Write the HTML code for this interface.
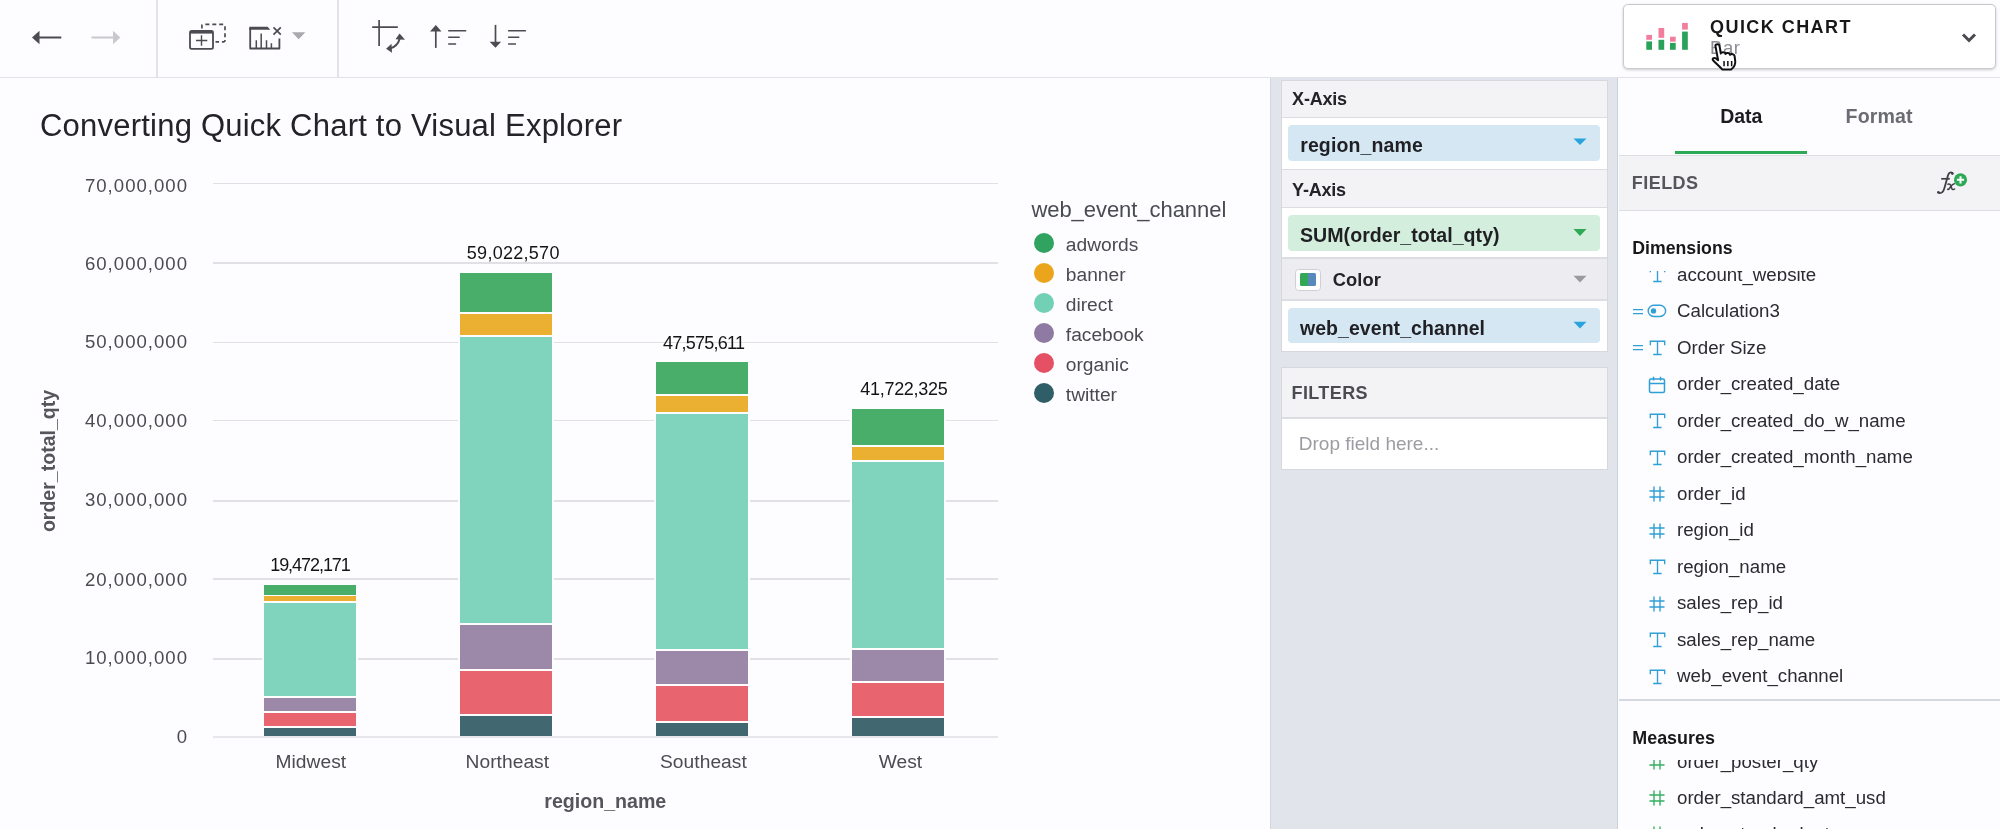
<!DOCTYPE html><html><head><meta charset="utf-8"><style>
*{box-sizing:border-box;margin:0;padding:0}
html,body{width:2000px;height:829px;overflow:hidden;background:#fdfcfe;font-family:"Liberation Sans",sans-serif;color:#2b2b30}
.a{position:absolute}
.t{position:absolute;white-space:nowrap;line-height:1}
.b{font-weight:bold}
</style></head><body><div id="w" style="position:absolute;left:0;top:0;width:2000px;height:829px;will-change:transform">
<div class="a" style="left:0.00px;top:76.50px;width:2000.00px;height:1.50px;background:#e1e3e9;"></div>
<div class="a" style="left:156.00px;top:0.00px;width:1.50px;height:77.00px;background:#e1e3e9;"></div>
<div class="a" style="left:337.00px;top:0.00px;width:1.50px;height:77.00px;background:#e1e3e9;"></div>
<svg class="a" style="left:0;top:0" width="540" height="77" viewBox="0 0 540 77">
 <path d="M32 37.5 L39.5 30.8 L39.5 44.2 Z" fill="#4b4b52"/>
 <rect x="38" y="36.5" width="23.3" height="2" fill="#4b4b52"/>
 <rect x="91.5" y="36.5" width="23" height="2" fill="#c8c8cd"/>
 <path d="M120.3 37.5 L113 30.8 L113 44.2 Z" fill="#c8c8cd"/>
 <!-- duplicate icon -->
 <rect x="190" y="31" width="23" height="17.8" rx="1.6" fill="none" stroke="#4b4b52" stroke-width="1.8"/>
 <rect x="190" y="31" width="23" height="2.6" fill="#4b4b52"/>
 <path d="M201.5 35.3 V45.8 M196 40.5 H207.3" stroke="#4b4b52" stroke-width="1.4"/>
 <path d="M201.9 28.6 V25.8 Q201.9 24.3 203.4 24.3 H223.6 Q225 24.3 225 25.8 V40.3 Q225 41.8 223.6 41.8 H215.5" fill="none" stroke="#4b4b52" stroke-width="1.7" stroke-dasharray="4 2.9"/>
 <!-- chart x icon -->
 <path d="M250.2 28 V48.5 H279.4 V38.4" fill="none" stroke="#4b4b52" stroke-width="1.8" stroke-linejoin="round"/>
 <path d="M249.3 26.8 H267.6 L270.3 29.7 H249.3 Z" fill="#4b4b52"/>
 <path d="M256.3 48 V40.2 M261.2 48 V33.5 M266.5 48 V40.2 M271.4 48 V43.3" stroke="#4b4b52" stroke-width="1.5"/>
 <path d="M273.5 27.3 L280.8 34.6 M280.8 27.3 L273.5 34.6" stroke="#4b4b52" stroke-width="1.7"/>
 <path d="M292 32.2 L305.3 32.2 L298.65 39.2 Z" fill="#a9a9ae"/>
 <!-- swap axes icon -->
 <path d="M372.2 27.15 H397.8 M379.1 20 V46" stroke="#4b4b52" stroke-width="1.7"/>
 <path d="M390 48.6 Q397.5 46.5 399.8 38.5" fill="none" stroke="#4b4b52" stroke-width="2"/>
 <path d="M399.6 33.4 L405 39.8 L395.5 39.3 Z" fill="#4b4b52"/>
 <path d="M386.1 48.8 L391.5 43.8 L392 52.8 Z" fill="#4b4b52"/>
 <!-- sort asc -->
 <path d="M435.8 47.9 V30" stroke="#4b4b52" stroke-width="1.7"/>
 <path d="M430 31.4 L435.8 24.9 L441.5 31.4 Z" fill="#4b4b52"/>
 <path d="M448.2 30.75 H466.2 M448.2 37.2 H459.7 M448.2 43.95 H456.1" stroke="#4b4b52" stroke-width="1.5"/>
 <!-- sort desc -->
 <path d="M495.5 24.9 V43" stroke="#4b4b52" stroke-width="1.7"/>
 <path d="M489.6 41.8 L495.5 47.85 L501.1 41.8 Z" fill="#4b4b52"/>
 <path d="M508.1 30.75 H525.9 M508.1 37.2 H519.3 M508.1 43.95 H516" stroke="#4b4b52" stroke-width="1.5"/>
</svg>
<div class="a" style="left:1622.5px;top:3.5px;width:373px;height:65px;background:#fff;border:1px solid #c9cacf;border-radius:5px;box-shadow:0 1px 3px rgba(0,0,0,0.2)"></div>
<svg class="a" style="left:1640px;top:18px" width="56" height="36" viewBox="1640 18 56 36">
 <rect x="1646.3" y="34.9" width="5.7" height="4.9" fill="#f17e9c"/>
 <rect x="1646.3" y="41.4" width="5.7" height="8.4" fill="#2ba25a"/>
 <rect x="1658.5" y="28" width="5.7" height="9.8" fill="#f17e9c"/>
 <rect x="1658.5" y="39.8" width="5.7" height="10" fill="#2ba25a"/>
 <rect x="1670" y="36.7" width="5.7" height="5" fill="#f17e9c"/>
 <rect x="1670" y="42.9" width="5.7" height="6.9" fill="#2ba25a"/>
 <rect x="1682.1" y="22.9" width="5.7" height="6.7" fill="#f17e9c"/>
 <rect x="1682.1" y="31.6" width="5.7" height="18.2" fill="#2ba25a"/>
</svg>
<div class="t b" style="left:1710.00px;top:17.90px;font-size:18px;color:#18181b;letter-spacing:1.45px;">QUICK CHART</div>
<div class="t" style="left:1710.00px;top:38.77px;font-size:18.5px;color:#8e8e94;letter-spacing:0.6px;">Bar</div>
<svg class="a" style="left:1958px;top:28px" width="22" height="18" viewBox="0 0 22 18">
 <path d="M5 6.5 L11 12.5 L17 6.5" fill="none" stroke="#4a4a50" stroke-width="3"/>
</svg>
<svg class="a" style="left:1706px;top:38px" width="40" height="40" viewBox="0 0 40 40">
 <g transform="translate(-1.98,3.24) scale(1.083,0.82)"><path d="M10.5 5.5 C10.5 3 14 3 14.3 5.5 L15.5 15 C16 13 19.5 13 19.8 15.5 C20.5 13.8 23.8 14 24 16.5 C25 15 28 15.5 28.2 18 L28.8 24 C29.3 29 27.5 32 25 34.5 L17 34.5 C15 32 12 28 8.5 23.5 C7 21.5 9 19.5 11 21 L13 23 Z" fill="#fff" stroke="#111" stroke-width="2" stroke-linejoin="round" vector-effect="non-scaling-stroke"/>
 <path d="M18.5 24 V30.5 M22 24 V30.5 M25.5 24 V30.5" stroke="#111" stroke-width="1.5" vector-effect="non-scaling-stroke"/></g>
</svg>
<div class="t" style="left:40.00px;top:110.05px;font-size:31px;color:#232328;letter-spacing:0.22px;">Converting Quick Chart to Visual Explorer</div>
<div class="a" style="left:212.50px;top:736.00px;width:785.00px;height:1.60px;background:#e6e7eb;"></div>
<div class="t" style="right:1813px;top:728.39px;font-size:18.6px;color:#4b4b50;letter-spacing:0px">0</div>
<div class="a" style="left:212.50px;top:658.00px;width:785.00px;height:1.60px;background:#e1e1e5;"></div>
<div class="t" style="right:1812.0px;top:648.79px;font-size:18.6px;color:#4b4b50;letter-spacing:1.0px">10,000,000</div>
<div class="a" style="left:212.50px;top:578.00px;width:785.00px;height:1.60px;background:#e1e1e5;"></div>
<div class="t" style="right:1812.0px;top:570.99px;font-size:18.6px;color:#4b4b50;letter-spacing:1.0px">20,000,000</div>
<div class="a" style="left:212.50px;top:500.00px;width:785.00px;height:1.60px;background:#e1e1e5;"></div>
<div class="t" style="right:1812.0px;top:490.89px;font-size:18.6px;color:#4b4b50;letter-spacing:1.0px">30,000,000</div>
<div class="a" style="left:212.50px;top:419.80px;width:785.00px;height:1.60px;background:#e1e1e5;"></div>
<div class="t" style="right:1812.0px;top:412.04px;font-size:18.6px;color:#4b4b50;letter-spacing:1.0px">40,000,000</div>
<div class="a" style="left:212.50px;top:341.90px;width:785.00px;height:1.60px;background:#e1e1e5;"></div>
<div class="t" style="right:1812.0px;top:333.24px;font-size:18.6px;color:#4b4b50;letter-spacing:1.0px">50,000,000</div>
<div class="a" style="left:212.50px;top:262.25px;width:785.00px;height:1.60px;background:#e1e1e5;"></div>
<div class="t" style="right:1812.0px;top:255.34px;font-size:18.6px;color:#4b4b50;letter-spacing:1.0px">60,000,000</div>
<div class="a" style="left:212.50px;top:182.80px;width:785.00px;height:1.60px;background:#e1e1e5;"></div>
<div class="t" style="right:1812.0px;top:176.79px;font-size:18.6px;color:#4b4b50;letter-spacing:1.0px">70,000,000</div>
<div class="t b" style="left:49px;top:460.6px;font-size:19.55px;color:#55555b;transform:translate(-50%,-50%) rotate(-90deg);transform-origin:center;letter-spacing:0px">order_total_qty</div>
<div class="a" style="left:261.80px;top:583.00px;width:96.60px;height:153.20px;background:#fdfcfe;"></div>
<div class="a" style="left:263.80px;top:585.00px;width:92.60px;height:9.70px;background:#4aae6b;"></div>
<div class="a" style="left:263.80px;top:596.30px;width:92.60px;height:5.10px;background:#ebb031;"></div>
<div class="a" style="left:263.80px;top:603.10px;width:92.60px;height:92.90px;background:#80d3bd;"></div>
<div class="a" style="left:263.80px;top:698.00px;width:92.60px;height:13.00px;background:#9c89aa;"></div>
<div class="a" style="left:263.80px;top:712.90px;width:92.60px;height:13.10px;background:#e8656f;"></div>
<div class="a" style="left:263.80px;top:727.90px;width:92.60px;height:8.20px;background:#416870;"></div>
<div class="a" style="left:457.90px;top:270.50px;width:96.60px;height:465.70px;background:#fdfcfe;"></div>
<div class="a" style="left:459.90px;top:272.50px;width:92.60px;height:39.30px;background:#4aae6b;"></div>
<div class="a" style="left:459.90px;top:314.10px;width:92.60px;height:20.80px;background:#ebb031;"></div>
<div class="a" style="left:459.90px;top:337.30px;width:92.60px;height:285.70px;background:#80d3bd;"></div>
<div class="a" style="left:459.90px;top:624.70px;width:92.60px;height:44.70px;background:#9c89aa;"></div>
<div class="a" style="left:459.90px;top:671.00px;width:92.60px;height:42.80px;background:#e8656f;"></div>
<div class="a" style="left:459.90px;top:715.70px;width:92.60px;height:20.10px;background:#416870;"></div>
<div class="a" style="left:653.90px;top:360.20px;width:96.60px;height:376.00px;background:#fdfcfe;"></div>
<div class="a" style="left:655.90px;top:362.20px;width:92.60px;height:31.40px;background:#4aae6b;"></div>
<div class="a" style="left:655.90px;top:395.70px;width:92.60px;height:16.40px;background:#ebb031;"></div>
<div class="a" style="left:655.90px;top:414.10px;width:92.60px;height:235.10px;background:#80d3bd;"></div>
<div class="a" style="left:655.90px;top:651.20px;width:92.60px;height:32.90px;background:#9c89aa;"></div>
<div class="a" style="left:655.90px;top:686.10px;width:92.60px;height:34.60px;background:#e8656f;"></div>
<div class="a" style="left:655.90px;top:722.90px;width:92.60px;height:12.80px;background:#416870;"></div>
<div class="a" style="left:849.70px;top:406.90px;width:96.60px;height:329.30px;background:#fdfcfe;"></div>
<div class="a" style="left:851.70px;top:408.90px;width:92.60px;height:35.80px;background:#4aae6b;"></div>
<div class="a" style="left:851.70px;top:447.10px;width:92.60px;height:12.70px;background:#ebb031;"></div>
<div class="a" style="left:851.70px;top:462.00px;width:92.60px;height:185.70px;background:#80d3bd;"></div>
<div class="a" style="left:851.70px;top:649.90px;width:92.60px;height:31.00px;background:#9c89aa;"></div>
<div class="a" style="left:851.70px;top:682.90px;width:92.60px;height:32.80px;background:#e8656f;"></div>
<div class="a" style="left:851.70px;top:717.80px;width:92.60px;height:18.00px;background:#416870;"></div>
<div class="t" style="left:270.20px;top:556.40px;font-size:18px;color:#141414;letter-spacing:-1.05px;">19,472,171</div>
<div class="t" style="left:466.80px;top:243.60px;font-size:18px;color:#141414;letter-spacing:0.28px;">59,022,570</div>
<div class="t" style="left:662.90px;top:333.70px;font-size:18px;color:#141414;letter-spacing:-0.75px;">47,575,611</div>
<div class="t" style="left:860.30px;top:379.90px;font-size:18px;color:#141414;letter-spacing:-0.3px;">41,722,325</div>
<div class="t" style="left:275.50px;top:751.68px;font-size:19.2px;color:#4b4b50;letter-spacing:0.05px;">Midwest</div>
<div class="t" style="left:465.50px;top:751.68px;font-size:19.2px;color:#4b4b50;letter-spacing:0.05px;">Northeast</div>
<div class="t" style="left:660.00px;top:751.68px;font-size:19.2px;color:#4b4b50;letter-spacing:0.05px;">Southeast</div>
<div class="t" style="left:878.70px;top:751.98px;font-size:19.2px;color:#4b4b50;letter-spacing:0.05px;">West</div>
<div class="t b" style="left:544.30px;top:791.84px;font-size:19.6px;color:#55555b;letter-spacing:0px;">region_name</div>
<div class="t" style="left:1031.40px;top:198.90px;font-size:22px;color:#4a4b52;letter-spacing:-0.05px;">web_event_channel</div>
<div class="a" style="left:1033.8px;top:233.0px;width:20px;height:20px;border-radius:50%;background:#2fa35f"></div>
<div class="t" style="left:1065.80px;top:234.88px;font-size:19.2px;color:#4a4b52;letter-spacing:0px;">adwords</div>
<div class="a" style="left:1033.8px;top:263.0px;width:20px;height:20px;border-radius:50%;background:#eaa51c"></div>
<div class="t" style="left:1065.80px;top:264.88px;font-size:19.2px;color:#4a4b52;letter-spacing:0px;">banner</div>
<div class="a" style="left:1033.8px;top:293.0px;width:20px;height:20px;border-radius:50%;background:#72d0b5"></div>
<div class="t" style="left:1065.80px;top:294.88px;font-size:19.2px;color:#4a4b52;letter-spacing:0px;">direct</div>
<div class="a" style="left:1033.8px;top:323.0px;width:20px;height:20px;border-radius:50%;background:#8e7aa3"></div>
<div class="t" style="left:1065.80px;top:324.88px;font-size:19.2px;color:#4a4b52;letter-spacing:0px;">facebook</div>
<div class="a" style="left:1033.8px;top:353.0px;width:20px;height:20px;border-radius:50%;background:#e55064"></div>
<div class="t" style="left:1065.80px;top:354.88px;font-size:19.2px;color:#4a4b52;letter-spacing:0px;">organic</div>
<div class="a" style="left:1033.8px;top:383.0px;width:20px;height:20px;border-radius:50%;background:#2f5e68"></div>
<div class="t" style="left:1065.80px;top:384.88px;font-size:19.2px;color:#4a4b52;letter-spacing:0px;">twitter</div>
<div class="a" style="left:1269.50px;top:78.00px;width:1.50px;height:751.00px;background:#d3d6dc;"></div>
<div class="a" style="left:1271.00px;top:78.00px;width:347.00px;height:751.00px;background:#e1e4ea;"></div>
<div class="a" style="left:1280.5px;top:79.5px;width:327px;height:272px;background:#fff;border:1px solid #d6d8de"></div>
<div class="a" style="left:1281.50px;top:80.50px;width:325.00px;height:36.50px;background:#f3f3f6;"></div>
<div class="a" style="left:1281.50px;top:116.50px;width:325.00px;height:1.50px;background:#dcdde2;"></div>
<div class="t b" style="left:1292.10px;top:89.90px;font-size:18px;color:#232328;letter-spacing:-0.2px;">X-Axis</div>
<div class="a" style="left:1288px;top:124.8px;width:312px;height:36.2px;background:#d4e7f2;border-radius:4px"></div>
<div class="t b" style="left:1300.20px;top:136.43px;font-size:19.5px;color:#1f1f24;letter-spacing:0.12px;">region_name</div>
<svg class="a" style="left:1572px;top:137px" width="16" height="10" viewBox="0 0 16 10"><path d="M1.5 1.5 H14.5 L8 8 Z" fill="#29a3dd"/></svg>
<div class="a" style="left:1281.50px;top:168.50px;width:325.00px;height:1.50px;background:#dcdde2;"></div>
<div class="a" style="left:1281.50px;top:170.00px;width:325.00px;height:36.80px;background:#f3f3f6;"></div>
<div class="a" style="left:1281.50px;top:206.50px;width:325.00px;height:1.50px;background:#dcdde2;"></div>
<div class="t b" style="left:1292.10px;top:181.20px;font-size:18px;color:#232328;letter-spacing:-0.2px;">Y-Axis</div>
<div class="a" style="left:1288px;top:214.5px;width:311.7px;height:36.1px;background:#d3eedc;border-radius:4px"></div>
<div class="t b" style="left:1300.00px;top:226.34px;font-size:19.6px;color:#1f1f24;letter-spacing:0.02px;">SUM(order_total_qty)</div>
<svg class="a" style="left:1572px;top:227px" width="16" height="10" viewBox="0 0 16 10"><path d="M1.5 2 H14.5 L8 9 Z" fill="#2ea955"/></svg>
<div class="a" style="left:1281.50px;top:257.20px;width:325.00px;height:1.50px;background:#dcdde2;"></div>
<div class="a" style="left:1281.50px;top:258.70px;width:325.00px;height:41.00px;background:#ededf1;"></div>
<div class="a" style="left:1281.50px;top:299.20px;width:325.00px;height:1.50px;background:#dcdde2;"></div>
<div class="a" style="left:1295.1px;top:268.6px;width:25.5px;height:22.1px;background:#fff;border:1.3px solid #cfd0d6;border-radius:3.5px"></div>
<div class="a" style="left:1299.80px;top:272.90px;width:8.20px;height:13.20px;background:#33a658;border-radius:1.5px 0 0 1.5px"></div>
<div class="a" style="left:1308.00px;top:272.90px;width:8.00px;height:13.20px;background:#5889bb;border-radius:0 1.5px 1.5px 0"></div>
<div class="t b" style="left:1332.70px;top:270.75px;font-size:18.3px;color:#232328;letter-spacing:0.1px;">Color</div>
<svg class="a" style="left:1572px;top:274px" width="16" height="10" viewBox="0 0 16 10"><path d="M1.5 1.8 H14.5 L8 8.6 Z" fill="#9a9aa0"/></svg>
<div class="a" style="left:1288px;top:307.5px;width:311.7px;height:35.9px;background:#d4e7f2;border-radius:4px"></div>
<div class="t b" style="left:1300.00px;top:318.93px;font-size:19.5px;color:#1f1f24;letter-spacing:0.05px;">web_event_channel</div>
<svg class="a" style="left:1572px;top:320px" width="16" height="10" viewBox="0 0 16 10"><path d="M1.5 1.8 H14.5 L8 8.6 Z" fill="#29a3dd"/></svg>
<div class="a" style="left:1280.5px;top:366.5px;width:327px;height:103px;background:#fff;border:1px solid #d6d8de"></div>
<div class="a" style="left:1281.50px;top:367.50px;width:325.00px;height:50.00px;background:#f3f3f6;"></div>
<div class="a" style="left:1281.50px;top:417.00px;width:325.00px;height:1.50px;background:#dcdde2;"></div>
<div class="t b" style="left:1291.50px;top:383.60px;font-size:18px;color:#4b4b52;letter-spacing:0.4px;">FILTERS</div>
<div class="t" style="left:1298.80px;top:434.25px;font-size:19px;color:#9c9ca2;letter-spacing:0px;">Drop field here...</div>
<div class="a" style="left:1617.00px;top:78.00px;width:1.20px;height:751.00px;background:#cdd1d8;"></div>
<div class="a" style="left:1618.20px;top:78.00px;width:381.80px;height:751.00px;background:#fdfcfe;"></div>
<div class="t b" style="left:1720.20px;top:107.12px;font-size:19.5px;color:#1c1c20;letter-spacing:0px;">Data</div>
<div class="t b" style="left:1845.60px;top:107.04px;font-size:19.6px;color:#6b6b72;letter-spacing:0.1px;">Format</div>
<div class="a" style="left:1674.70px;top:150.80px;width:132.70px;height:3.40px;background:#2ea955;"></div>
<div class="a" style="left:1618.50px;top:154.50px;width:381.50px;height:1.50px;background:#dcdde2;"></div>
<div class="a" style="left:1618.50px;top:156.00px;width:381.50px;height:54.00px;background:#f3f3f6;"></div>
<div class="a" style="left:1618.50px;top:209.50px;width:381.50px;height:1.50px;background:#dcdde2;"></div>
<div class="t b" style="left:1631.80px;top:173.90px;font-size:18px;color:#55555b;letter-spacing:0.45px;">FIELDS</div>
<svg class="a" style="left:1925px;top:160px" width="60" height="40" viewBox="0 0 60 40">
 <path d="M27.6 13.6 C27.2 11.9 24.9 11.8 23.7 13.8 C22.4 16 20.3 26.5 18.6 30.3 C17.6 32.6 15.2 33.8 13.2 32.6" fill="none" stroke="#3f3f45" stroke-width="1.8" stroke-linecap="round"/>
 <circle cx="27.3" cy="13.4" r="1.3" fill="#3f3f45"/>
 <circle cx="13.4" cy="32.2" r="1.3" fill="#3f3f45"/>
 <path d="M16.2 18.8 H24.8" stroke="#3f3f45" stroke-width="1.7"/>
 <path d="M22.9 24.2 C24.6 23.4 25.6 24.6 26.1 26.3 L26.8 28.4 C27.3 29.8 28.6 29.9 29.6 29" fill="none" stroke="#3f3f45" stroke-width="1.5" stroke-linecap="round"/>
 <path d="M29.3 23.8 C28 23.9 26.5 25.5 25.5 27 C24.5 28.6 23.5 29.7 22.6 29.3" fill="none" stroke="#3f3f45" stroke-width="1.5" stroke-linecap="round"/>
 <circle cx="35.5" cy="19.8" r="6.6" fill="#2ea955"/>
 <path d="M35.5 16.2 V23.4 M31.9 19.8 H39.1" stroke="#fff" stroke-width="2"/>
</svg>
<div class="t b" style="left:1632.30px;top:239.96px;font-size:17.7px;color:#18181b;letter-spacing:0px;">Dimensions</div>
<div class="a" style="left:1618.5px;top:270.5px;width:381.5px;height:428.5px;overflow:hidden">
<svg class="a" style="left:29.5px;top:-4.399999999999977px" width="18" height="18" viewBox="0 0 18 18"><path d="M2.3 6.2 V2.2 H16.7 V6.2 M9.5 2.2 V15.5 M5.2 15.5 H13.6" fill="none" stroke="#2f9fd6" stroke-width="1.35"/></svg>
<div class="t" style="left:58.50px;top:-4.79px;font-size:18.7px;color:#2b2b30">account_website</div>
<svg class="a" style="left:13.5px;top:35.10000000000002px" width="12" height="12" viewBox="0 0 12 12"><path d="M1 3.6 H11 M1 7.6 H11" stroke="#2f9fd6" stroke-width="1.35"/></svg>
<svg class="a" style="left:27.0px;top:33.10000000000002px" width="22" height="16" viewBox="0 0 22 16"><rect x="2.2" y="1.3" width="17.4" height="11.2" rx="5.6" fill="none" stroke="#2f9fd6" stroke-width="1.4"/><circle cx="7.5" cy="6.9" r="2.7" fill="#2f9fd6"/></svg>
<div class="t" style="left:58.50px;top:31.71px;font-size:18.7px;color:#2b2b30">Calculation3</div>
<svg class="a" style="left:29.5px;top:68.60000000000002px" width="18" height="18" viewBox="0 0 18 18"><path d="M2.3 6.2 V2.2 H16.7 V6.2 M9.5 2.2 V15.5 M5.2 15.5 H13.6" fill="none" stroke="#2f9fd6" stroke-width="1.35"/></svg>
<svg class="a" style="left:13.5px;top:71.60000000000002px" width="12" height="12" viewBox="0 0 12 12"><path d="M1 3.6 H11 M1 7.6 H11" stroke="#2f9fd6" stroke-width="1.35"/></svg>
<div class="t" style="left:58.50px;top:68.21px;font-size:18.7px;color:#2b2b30">Order Size</div>
<svg class="a" style="left:29.5px;top:105.10000000000002px" width="18" height="18" viewBox="0 0 18 18"><rect x="1.5" y="3" width="15" height="13.5" rx="1.5" fill="none" stroke="#2f9fd6" stroke-width="1.5"/><path d="M1.5 7.5 H16.5 M5.5 0.8 V4.5 M12.5 0.8 V4.5" stroke="#2f9fd6" stroke-width="1.5"/></svg>
<div class="t" style="left:58.50px;top:104.71px;font-size:18.7px;color:#2b2b30">order_created_date</div>
<svg class="a" style="left:29.5px;top:141.60000000000002px" width="18" height="18" viewBox="0 0 18 18"><path d="M2.3 6.2 V2.2 H16.7 V6.2 M9.5 2.2 V15.5 M5.2 15.5 H13.6" fill="none" stroke="#2f9fd6" stroke-width="1.35"/></svg>
<div class="t" style="left:58.50px;top:141.21px;font-size:18.7px;color:#2b2b30">order_created_do_w_name</div>
<svg class="a" style="left:29.5px;top:178.10000000000002px" width="18" height="18" viewBox="0 0 18 18"><path d="M2.3 6.2 V2.2 H16.7 V6.2 M9.5 2.2 V15.5 M5.2 15.5 H13.6" fill="none" stroke="#2f9fd6" stroke-width="1.35"/></svg>
<div class="t" style="left:58.50px;top:177.71px;font-size:18.7px;color:#2b2b30">order_created_month_name</div>
<svg class="a" style="left:29.5px;top:214.60000000000002px" width="18" height="18" viewBox="0 0 18 18"><path d="M6 1.5 V16.5 M12 1.5 V16.5 M1.5 6 H16.5 M1.5 12 H16.5" fill="none" stroke="#2f9fd6" stroke-width="1.4"/></svg>
<div class="t" style="left:58.50px;top:214.21px;font-size:18.7px;color:#2b2b30">order_id</div>
<svg class="a" style="left:29.5px;top:251.10000000000002px" width="18" height="18" viewBox="0 0 18 18"><path d="M6 1.5 V16.5 M12 1.5 V16.5 M1.5 6 H16.5 M1.5 12 H16.5" fill="none" stroke="#2f9fd6" stroke-width="1.4"/></svg>
<div class="t" style="left:58.50px;top:250.71px;font-size:18.7px;color:#2b2b30">region_id</div>
<svg class="a" style="left:29.5px;top:287.6px" width="18" height="18" viewBox="0 0 18 18"><path d="M2.3 6.2 V2.2 H16.7 V6.2 M9.5 2.2 V15.5 M5.2 15.5 H13.6" fill="none" stroke="#2f9fd6" stroke-width="1.35"/></svg>
<div class="t" style="left:58.50px;top:287.21px;font-size:18.7px;color:#2b2b30">region_name</div>
<svg class="a" style="left:29.5px;top:324.1px" width="18" height="18" viewBox="0 0 18 18"><path d="M6 1.5 V16.5 M12 1.5 V16.5 M1.5 6 H16.5 M1.5 12 H16.5" fill="none" stroke="#2f9fd6" stroke-width="1.4"/></svg>
<div class="t" style="left:58.50px;top:323.71px;font-size:18.7px;color:#2b2b30">sales_rep_id</div>
<svg class="a" style="left:29.5px;top:360.6px" width="18" height="18" viewBox="0 0 18 18"><path d="M2.3 6.2 V2.2 H16.7 V6.2 M9.5 2.2 V15.5 M5.2 15.5 H13.6" fill="none" stroke="#2f9fd6" stroke-width="1.35"/></svg>
<div class="t" style="left:58.50px;top:360.21px;font-size:18.7px;color:#2b2b30">sales_rep_name</div>
<svg class="a" style="left:29.5px;top:397.1px" width="18" height="18" viewBox="0 0 18 18"><path d="M2.3 6.2 V2.2 H16.7 V6.2 M9.5 2.2 V15.5 M5.2 15.5 H13.6" fill="none" stroke="#2f9fd6" stroke-width="1.35"/></svg>
<div class="t" style="left:58.50px;top:396.71px;font-size:18.7px;color:#2b2b30">web_event_channel</div>
</div>
<div class="a" style="left:1618.50px;top:699.30px;width:381.50px;height:1.50px;background:#d5d8de;"></div>
<div class="t b" style="left:1632.30px;top:729.78px;font-size:17.9px;color:#18181b;letter-spacing:0px;">Measures</div>
<div class="a" style="left:1618.5px;top:760px;width:381.5px;height:69px;overflow:hidden">
<svg class="a" style="left:29.5px;top:-6.7999999999999545px" width="18" height="18" viewBox="0 0 18 18"><path d="M6 1.5 V16.5 M12 1.5 V16.5 M1.5 6 H16.5 M1.5 12 H16.5" fill="none" stroke="#35b061" stroke-width="1.4"/></svg>
<div class="t" style="left:58.50px;top:-7.19px;font-size:18.7px;color:#2b2b30">order_poster_qty</div>
<svg class="a" style="left:29.5px;top:29.300000000000068px" width="18" height="18" viewBox="0 0 18 18"><path d="M6 1.5 V16.5 M12 1.5 V16.5 M1.5 6 H16.5 M1.5 12 H16.5" fill="none" stroke="#35b061" stroke-width="1.4"/></svg>
<div class="t" style="left:58.50px;top:28.91px;font-size:18.7px;color:#2b2b30">order_standard_amt_usd</div>
<svg class="a" style="left:29.5px;top:65.40000000000009px" width="18" height="18" viewBox="0 0 18 18"><path d="M6 1.5 V16.5 M12 1.5 V16.5 M1.5 6 H16.5 M1.5 12 H16.5" fill="none" stroke="#35b061" stroke-width="1.4"/></svg>
<div class="t" style="left:58.50px;top:65.01px;font-size:18.7px;color:#2b2b30">order_standard_qty</div>
</div>
</div></body></html>
